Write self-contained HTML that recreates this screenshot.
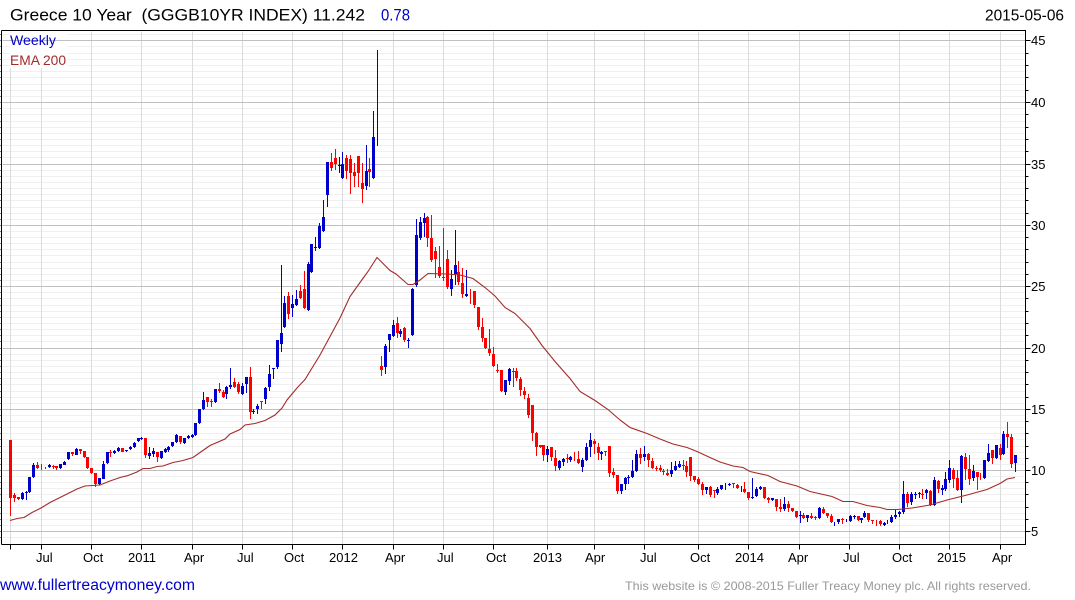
<!DOCTYPE html>
<html><head><meta charset="utf-8"><title>Greece 10 Year</title>
<style>
html,body{margin:0;padding:0;background:#fff;width:1075px;height:600px;overflow:hidden}
svg{display:block}
text{font-family:"Liberation Sans",sans-serif}
</style></head><body>
<svg width="1075" height="600" viewBox="0 0 1075 600" xmlns="http://www.w3.org/2000/svg">
<g shape-rendering="crispEdges" fill="none">
<g transform="translate(.5,.5)">
<path stroke="#f0f0f0" d="M2 537H1025M2 525H1025M2 519H1025M2 513H1025M2 507H1025M2 501H1025M2 494H1025M2 488H1025M2 482H1025M2 476H1025M2 464H1025M2 458H1025M2 452H1025M2 446H1025M2 439H1025M2 433H1025M2 427H1025M2 421H1025M2 415H1025M2 403H1025M2 397H1025M2 391H1025M2 384H1025M2 378H1025M2 372H1025M2 366H1025M2 360H1025M2 354H1025M2 341H1025M2 335H1025M2 329H1025M2 323H1025M2 317H1025M2 311H1025M2 305H1025M2 298H1025M2 292H1025M2 280H1025M2 274H1025M2 268H1025M2 262H1025M2 255H1025M2 249H1025M2 243H1025M2 237H1025M2 231H1025M2 219H1025M2 213H1025M2 207H1025M2 200H1025M2 194H1025M2 188H1025M2 182H1025M2 176H1025M2 170H1025M2 157H1025M2 151H1025M2 145H1025M2 139H1025M2 133H1025M2 127H1025M2 121H1025M2 114H1025M2 108H1025M2 96H1025M2 90H1025M2 84H1025M2 77H1025M2 71H1025M2 65H1025M2 59H1025M2 53H1025M2 46H1025M2 34H1025"/>
<path stroke="#dcdcdc" d="M10 31V544M41 31V544M91 31V544M141 31V544M192 31V544M242 31V544M292 31V544M342 31V544M393 31V544M443 31V544M493 31V544M547 31V544M594 31V544M644 31V544M698 31V544M748 31V544M799 31V544M849 31V544M899 31V544M949 31V544M1000 31V544"/>
</g>
<rect x="10" y="32" width="57" height="36" fill="#fff"/>
<g transform="translate(.5,.5)">
<path stroke="#c0c0c0" d="M2 531H1025M2 470H1025M2 409H1025M2 348H1025M2 286H1025M2 225H1025M2 164H1025M2 102H1025M2 40H1025"/>
<path stroke="#000" d="M1 30H1025V544H1M1 30V544"/>
<path stroke="#000" d="M0 537H1M0 531H1M0 525H1M0 519H1M0 513H1M0 507H1M0 501H1M0 494H1M0 488H1M0 482H1M0 476H1M0 470H1M0 464H1M0 458H1M0 452H1M0 446H1M0 439H1M0 433H1M0 427H1M0 421H1M0 415H1M0 409H1M0 403H1M0 397H1M0 391H1M0 384H1M0 378H1M0 372H1M0 366H1M0 360H1M0 354H1M0 348H1M0 341H1M0 335H1M0 329H1M0 323H1M0 317H1M0 311H1M0 305H1M0 298H1M0 292H1M0 286H1M0 280H1M0 274H1M0 268H1M0 262H1M0 255H1M0 249H1M0 243H1M0 237H1M0 231H1M0 225H1M0 219H1M0 213H1M0 207H1M0 200H1M0 194H1M0 188H1M0 182H1M0 176H1M0 170H1M0 164H1M0 157H1M0 151H1M0 145H1M0 139H1M0 133H1M0 127H1M0 121H1M0 114H1M0 108H1M0 102H1M0 96H1M0 90H1M0 84H1M0 77H1M0 71H1M0 65H1M0 59H1M0 53H1M0 46H1M0 40H1M0 34H1"/>
<path stroke="#000" d="M1025 531H1030M1025 470H1030M1025 409H1030M1025 348H1030M1025 286H1030M1025 225H1030M1025 164H1030M1025 102H1030M1025 40H1030M1025 519H1028M1025 507H1028M1025 494H1028M1025 482H1028M1025 458H1028M1025 446H1028M1025 433H1028M1025 421H1028M1025 397H1028M1025 384H1028M1025 372H1028M1025 360H1028M1025 335H1028M1025 323H1028M1025 311H1028M1025 298H1028M1025 274H1028M1025 262H1028M1025 249H1028M1025 237H1028M1025 213H1028M1025 200H1028M1025 188H1028M1025 176H1028M1025 151H1028M1025 139H1028M1025 127H1028M1025 114H1028M1025 90H1028M1025 77H1028M1025 65H1028M1025 53H1028"/>
<path stroke="#000" d="M10 544V549M41 544V549M91 544V549M141 544V549M192 544V549M242 544V549M292 544V549M342 544V549M393 544V549M443 544V549M493 544V549M547 544V549M594 544V549M644 544V549M698 544V549M748 544V549M799 544V549M849 544V549M899 544V549M949 544V549M1000 544V549"/>
</g>
<g transform="translate(.5,0)">
<path stroke="#0000cc" stroke-width="1" d="M22 492V500M26 491V500M29 477V493M33 463V478M49 464V468M60 464V469M64 461V465M68 452V460M76 448V455M99 478V485M103 461V479M107 452V464M114 450V454M118 447V452M126 450V452M130 446V450M134 442V448M138 438V442M141 437V440M149 447V459M153 448V457M161 451V459M165 448V453M168 446V452M172 442V447M176 434V443M184 438V444M188 435V439M192 434V438M195 423V436M199 409V424M203 392V410M215 389V403M226 386V399M230 368V389M242 383V395M246 377V393M253 409V414M257 404V414M265 387V404M269 365V391M273 368V379M277 340V369M281 265V352M284 296V328M292 295V317M296 290V306M308 262V311M311 244V273M315 237V251M319 223V249M323 200V232M327 162V207M339 157V173M342 152V179M366 145V190M373 111V179M377 50V146M385 344V374M389 334V352M393 320V337M400 329V337M408 338V348M412 288V336M416 219V287M420 217V240M424 213V237M451 270V296M455 230V285M466 270V297M505 380V395M509 368V385M547 446V462M559 460V470M563 458V466M570 456V462M582 458V472M586 443V461M590 433V457M601 451V460M621 484V494M625 477V490M628 475V484M632 460V478M636 450V472M644 446V461M671 462V477M675 461V471M679 461V468M706 487V494M717 487V495M721 485V490M725 483V490M729 483V486M741 486V492M752 478V499M756 487V497M760 486V490M772 498V501M784 497V511M800 511V523M807 515V522M819 507V519M834 522V526M838 519V524M846 519V522M850 515V522M854 515V519M861 518V523M864 511V518M884 522V526M887 520V524M891 515V523M895 510V519M899 511V517M903 481V514M911 492V505M915 492V499M919 492V498M926 489V499M934 477V506M942 485V495M945 472V491M949 460V483M961 455V503M973 465V481M984 460V479M988 444V462M996 445V459M1003 431V455M1015 455V472"/>
<path stroke="#0000cc" stroke-width="3" d="M22 493V499M26 492V493M29 477V492M33 465V477M49 465V467M60 464V468M64 462V465M68 452V459M76 449V455M99 478V484M103 464V479M107 452V463M114 451V453M118 448V451M126 450V451M130 447V449M134 443V447M138 438V441M141 438V439M149 453V456M153 451V454M161 451V458M165 449V452M168 447V450M172 442V446M176 435V442M184 438V443M188 436V438M192 435V437M195 423V435M199 409V423M203 400V409M215 389V402M226 387V394M230 385V387M242 386V394M246 377V384M253 411V412M257 406V409M265 388V399M269 374V387M273 368V369M277 340V367M281 333V344M284 303V327M292 304V308M296 299V305M308 264V310M311 244V272M315 247V248M319 226V248M323 217V231M327 162V195M339 165V166M342 164V178M366 171V186M373 137V178M385 346V367M389 334V340M393 325V336M400 331V334M408 340V341M412 289V335M416 235V285M420 222V238M424 218V223M451 279V289M455 265V274M466 294V296M505 380V392M509 369V381M547 449V455M559 461V468M563 459V462M570 457V460M582 460V467M586 447V460M590 440V447M601 452V454M621 484V491M625 478V484M628 477V478M632 471V477M636 454V471M644 454V457M671 470V474M675 466V470M679 464V467M706 487V490M717 489V493M721 485V489M729 484V485M752 497V498M756 489V496M760 487V489M772 498V500M784 504V509M800 515V516M807 515V518M819 508V518M838 519V522M850 516V521M854 516V517M861 518V520M864 513V517M884 523V525M891 517V522M895 515V517M899 512V514M903 494V512M911 494V502M915 494V495M919 493V494M926 490V493M934 480V505M942 488V490M945 479V489M949 468V480M961 456V490M973 471V478M984 460V478M988 453V461M996 445V458M1003 434V454M1015 455V463"/>
<path stroke="#ff0000" stroke-width="1" d="M10 440V516M14 493V502M18 497V500M37 462V469M41 464V470M45 467V469M53 465V469M56 466V470M72 452V456M80 449V454M84 451V458M87 457V469M91 468V474M95 473V487M110 450V457M122 448V452M145 438V458M157 452V462M180 436V444M207 397V407M211 399V407M219 383V393M223 390V398M234 378V388M238 382V394M250 367V419M261 401V409M288 292V319M300 285V299M304 271V309M331 153V171M335 149V170M346 155V179M350 155V194M354 163V187M358 156V187M362 163V203M369 158V187M381 356V376M397 317V338M404 327V342M427 216V247M431 215V262M435 247V278M439 246V278M443 228V281M447 250V289M458 261V285M462 268V298M470 289V304M474 291V308M478 307V330M482 318V342M485 338V349M489 329V356M493 347V367M497 364V373M501 370V392M513 368V387M516 368V381M520 377V396M524 387V399M528 394V418M532 405V441M536 432V456M540 445V448M543 445V461M551 447V461M555 450V471M567 454V463M574 452V461M578 451V464M594 439V454M598 443V460M605 451V456M609 446V477M613 468V478M617 475V494M640 448V464M648 453V467M652 458V469M656 466V471M660 465V472M663 469V475M667 469V476M683 460V470M686 461V477M690 457V481M694 476V482M698 477V485M702 482V495M710 486V497M714 490V498M733 483V488M737 484V489M744 482V493M748 492V500M764 487V499M768 497V503M776 499V511M780 499V512M788 501V512M792 508V512M796 511V518M803 513V519M811 513V519M815 516V520M823 507V514M827 513V518M831 514V523M842 518V524M858 516V521M868 513V522M872 520V524M876 520V526M880 520V526M907 492V507M922 489V499M930 490V506M938 480V493M953 468V488M957 470V491M965 453V480M969 455V485M977 472V490M980 473V480M992 450V464M1000 444V460M1007 422V448M1011 434V468"/>
<path stroke="#ff0000" stroke-width="3" d="M10 440V498M14 495V498M18 497V499M37 465V468M53 466V467M56 466V468M72 452V454M80 449V451M84 451V457M87 457V468M91 468V473M95 473V484M110 452V453M122 448V452M145 438V455M157 452V457M180 436V442M207 397V402M211 401V402M219 389V391M223 392V397M234 382V387M238 384V392M250 377V412M261 401V402M288 296V314M300 291V298M304 289V308M331 162V168M335 158V164M346 158V171M350 159V173M354 172V176M358 156V173M362 183V189M369 169V172M381 366V370M397 323V333M404 328V340M427 217V238M431 238V260M435 251V259M439 267V276M443 277V278M447 259V287M458 272V282M462 283V294M474 291V305M478 307V327M482 327V338M485 338V348M489 349V353M493 354V366M497 370V371M501 370V391M513 371V372M516 371V378M520 379V390M524 391V395M528 398V415M532 405V433M536 433V447M540 445V447M543 445V455M551 447V457M555 458V466M567 458V459M578 459V463M594 441V444M598 447V453M605 451V452M609 446V473M613 472V475M617 475V491M640 454V458M648 454V460M652 461V468M656 468V469M660 468V470M663 471V472M667 473V475M683 465V466M686 466V472M690 457V476M694 476V480M698 479V484M702 484V490M710 487V495M714 490V491M733 483V484M737 485V488M744 489V492M748 492V498M764 487V498M768 498V500M776 499V507M780 507V509M788 504V508M792 508V511M796 511V517M803 515V518M811 516V518M815 517V518M823 509V513M827 513V516M831 516V522M842 519V520M858 516V520M868 513V520M872 520V521M880 521V524M907 494V503M922 494V495M930 491V505M938 481V489M953 470V479M957 478V490M965 457V469M969 469V479M977 472V477M992 450V458M1000 448V455M1007 434V437M1011 437V464"/>
</g>
</g>
<path fill="none" stroke="#a52a2a" stroke-width="1.1" d="M10 520.5L17 518.5L24 517.5L32 512.5L41 508L50 502.5L60 497.5L70 492.5L77 489L85 486L100 485L110 481L120 477.5L128 475.5L137 472L143 468.5L150 468.5L157 466.5L163 466L173 462.5L183 460.5L193 457.5L200 452.5L210 445.5L225 439L230 434L240 429.5L245 425L255 423.5L265 420.5L275 415L282 408L287 400L297 388L305 379.5L320 355L330 336.5L340 318L350 296.5L360 282.5L368 271.5L377 257.5L390 270.5L396 274L408 284.5L413 284.5L420 280L428 273.5L447 274L460 275L473 278.5L485 287.5L495 296L505 307.5L515 313.5L530 328.5L542 345.5L555 361.5L570 378.5L580 391.5L595 400.5L608 409.5L620 420L630 427.5L647 433.5L660 439L673 444L687 447.5L697 451.5L710 457.5L720 462L733 466L743 467.5L750 471.5L768 475.5L780 481.5L797 486L810 491.5L832 496.5L843 501.5L853 501.5L867 505.5L880 507.5L887 509.5L898 509.5L912 508L930 505L947 500L967 495L987 489.5L1000 483.5L1007 479L1015 477.5"/>
<text x="10" y="20.5" font-size="16.5" fill="#000" textLength="355" lengthAdjust="spacingAndGlyphs">Greece 10 Year &#160;(GGGB10YR INDEX) 11.242</text>
<text x="381" y="20.5" font-size="16.5" fill="#0000cc" textLength="29" lengthAdjust="spacingAndGlyphs">0.78</text>
<text x="985" y="20.5" font-size="16" fill="#000" textLength="79" lengthAdjust="spacingAndGlyphs">2015-05-06</text>
<text x="10" y="45" font-size="14" fill="#0000cc" textLength="46" lengthAdjust="spacingAndGlyphs">Weekly</text>
<text x="10" y="65" font-size="14" fill="#a52a2a" textLength="56" lengthAdjust="spacingAndGlyphs">EMA 200</text>
<g font-size="13" fill="#000">
<text x="1031" y="45">45</text><text x="1031" y="107">40</text><text x="1031" y="169">35</text><text x="1031" y="230">30</text><text x="1031" y="291">25</text><text x="1031" y="353">20</text><text x="1031" y="414">15</text><text x="1031" y="475">10</text><text x="1031" y="536">5</text>
<g>
<text x="36" y="562">Jul</text><text x="83" y="562">Oct</text><text x="128" y="562">2011</text><text x="184" y="562">Apr</text><text x="237" y="562">Jul</text><text x="284" y="562">Oct</text><text x="329" y="562">2012</text><text x="385" y="562">Apr</text><text x="437" y="562">Jul</text><text x="486" y="562">Oct</text><text x="533" y="562">2013</text><text x="585" y="562">Apr</text><text x="640" y="562">Jul</text><text x="690" y="562">Oct</text><text x="735" y="562">2014</text><text x="788" y="562">Apr</text><text x="843" y="562">Jul</text><text x="892" y="562">Oct</text><text x="937" y="562">2015</text><text x="992" y="562">Apr</text>
</g></g>
<text x="0" y="590" font-size="15.5" fill="#0000cc" textLength="195" lengthAdjust="spacingAndGlyphs">www.fullertreacymoney.com</text>
<text x="625" y="590" font-size="12" fill="#999" textLength="406" lengthAdjust="spacingAndGlyphs">This website is © 2008-2015 Fuller Treacy Money plc. All rights reserved.</text>
</svg>
</body></html>
